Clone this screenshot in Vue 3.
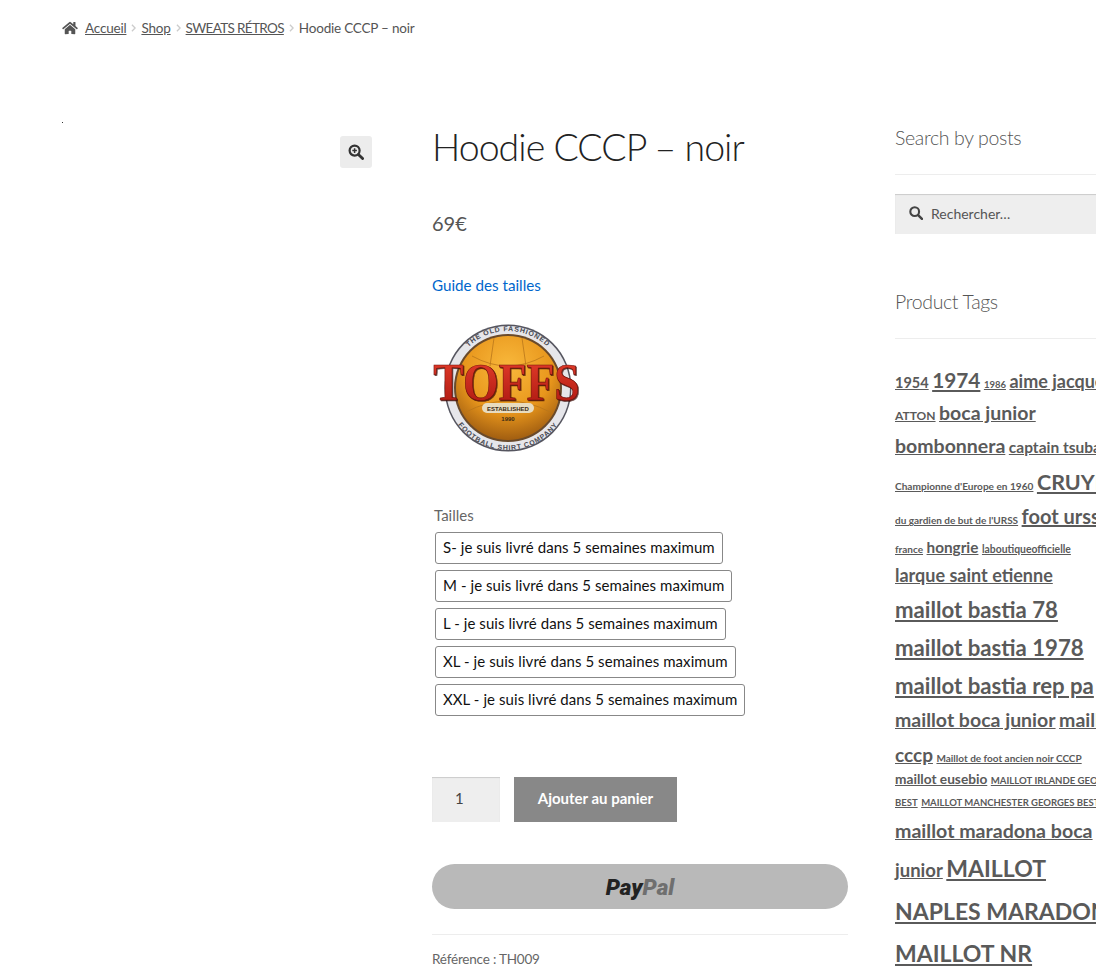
<template>
  <div class="page">
    <!-- Breadcrumb -->
    <nav class="breadcrumb">
      <svg class="home-icon" viewBox="0 0 576 512"><path d="M280.37 148.26L96 300.11V464a16 16 0 0 0 16 16l112.06-.29a16 16 0 0 0 15.92-16V368a16 16 0 0 1 16-16h64a16 16 0 0 1 16 16v95.64a16 16 0 0 0 16 16.05L464 480a16 16 0 0 0 16-16V300L295.67 148.26a12.19 12.19 0 0 0-15.3 0zM571.6 251.47L488 182.56V44.05a12 12 0 0 0-12-12h-56a12 12 0 0 0-12 12v72.61L318.47 43a48 48 0 0 0-61 0L4.34 251.47a12 12 0 0 0-1.6 16.9l25.5 31A12 12 0 0 0 45.15 301l235.22-193.74a12.19 12.19 0 0 1 15.3 0L530.9 301a12 12 0 0 0 16.9-1.6l25.5-31a12 12 0 0 0-1.7-16.93z" /></svg>
      <template v-for="c in crumbs" :key="c">
        <a class="crumb-link">{{ c }}</a>
        <svg class="crumb-sep" viewBox="0 0 6 10"><path d="M1 1l4 4-4 4" /></svg>
      </template>
      <span>Hoodie CCCP – noir</span>
    </nav>

    <div class="columns">
      <!-- Gallery -->
      <div class="gallery">
        <span class="gallery-dot"></span>
        <button class="zoom-btn">
          <svg viewBox="0 0 16 16" width="16" height="16">
            <circle cx="6.6" cy="6.6" r="5" fill="none" stroke="#333" stroke-width="2.2" />
            <path d="M10.4 10.4l4.2 4.2" stroke="#333" stroke-width="2.8" stroke-linecap="round" />
            <path d="M6.6 4.3v4.6M4.3 6.6h4.6" stroke="#333" stroke-width="1.5" />
          </svg>
        </button>
      </div>

      <!-- Summary -->
      <main class="summary">
        <h1 class="title">Hoodie CCCP – noir</h1>
        <p class="price">69€</p>
        <a class="guide">Guide des tailles</a>

        <svg class="logo" viewBox="0 0 150 134">
          <defs>
            <radialGradient id="ball" cx="50%" cy="30%" r="72%">
              <stop offset="0%" stop-color="#f9b93c" />
              <stop offset="60%" stop-color="#e8961c" />
              <stop offset="100%" stop-color="#9c5a10" />
            </radialGradient>
            <linearGradient id="red" x1="0" y1="0" x2="0" y2="1">
              <stop offset="0%" stop-color="#e8402c" />
              <stop offset="100%" stop-color="#a81510" />
            </linearGradient>
            <path id="arcTop" d="M19 66a57 57 0 0 1 114 0" />
            <path id="arcBottom" d="M14 66a62 62 0 0 0 124 0" />
          </defs>
          <circle cx="76" cy="66" r="63.5" fill="#55555f" />
          <circle cx="76" cy="66" r="62" fill="#e6e6ea" />
          <circle cx="76" cy="66" r="54" fill="#6a4a2a" />
          <circle cx="76" cy="66" r="52" fill="url(#ball)" />
          <path d="M40 34q36 20 72 0M62 16l-4 28M90 16l4 28M34 90q42-22 84 0" fill="none" stroke="#b9761a" stroke-width="0.8" />
          <text class="ring-text" fill="#4a4a52"><textPath href="#arcTop" startOffset="50%" text-anchor="middle">THE OLD FASHIONED</textPath></text>
          <text class="ring-text" fill="#4a4a52"><textPath href="#arcBottom" startOffset="50%" text-anchor="middle">FOOTBALL SHIRT COMPANY</textPath></text>
          <rect x="50" y="81" width="52" height="10" rx="5" fill="#e8dcc0" />
          <text class="est" x="76" y="88.5" text-anchor="middle">ESTABLISHED</text>
          <text class="est" x="76" y="99" text-anchor="middle">1990</text>
          <text class="logo-name" transform="translate(74.5 78) scale(0.88 1)" text-anchor="middle">TOFFS</text>
        </svg>

        <div class="sizes-label">Tailles</div>
        <div class="sizes">
          <label v-for="s in sizes" :key="s" class="size">{{ s }} je suis livré dans 5 semaines maximum</label>
        </div>

        <div class="cart">
          <div class="qty">1</div>
          <button class="add-btn">Ajouter au panier</button>
        </div>

        <button class="paypal"><span class="pp-a">Pay</span><span class="pp-b">Pal</span></button>
        <div class="meta">Référence : TH009</div>
      </main>

      <!-- Sidebar -->
      <aside class="sidebar">
        <h2 class="widget-title">Search by posts</h2>
        <div class="search">
          <svg viewBox="0 0 16 16" width="14" height="14">
            <circle cx="6.5" cy="6.5" r="5" fill="none" stroke="#444" stroke-width="2.4" />
            <path d="M10.4 10.4l4.4 4.4" stroke="#444" stroke-width="2.8" stroke-linecap="round" />
          </svg>
          <span>Rechercher…</span>
        </div>
        <h2 class="widget-title tags-title">Product Tags</h2>
        <div class="tags">
          <div v-for="(row, i) in tagRows" :key="i" class="tag-row" :style="{ height: row.h + 'px' }">
            <a v-for="t in row.items" :key="t[0]" class="tag" :style="{ fontSize: t[1] + 'px' }">{{ t[0] }}</a>
          </div>
        </div>
      </aside>
    </div>
  </div>
</template>

<script setup>
const crumbs = ['Accueil', 'Shop', 'SWEATS RÉTROS']
const sizes = ['S-', 'M -', 'L -', 'XL -', 'XXL -']

const tagRows = [
  { h: 33, items: [['1954', 14.5], ['1974', 20.8], ['1986', 9.5], ['aime jacquet', 18]] },
  { h: 33, items: [['ATTON', 12], ['boca junior', 19.5]] },
  { h: 36, items: [['bombonnera', 19.5], ['captain tsubasa', 15.5]] },
  { h: 34, items: [["Championne d'Europe en 1960", 10.1], ['CRUYFF', 21.5]] },
  { h: 31, items: [["du gardien de but de l'URSS", 10], ['foot urss', 20]] },
  { h: 28, items: [['france', 10], ['hongrie', 15.3], ['laboutiqueofficielle', 10.4]] },
  { h: 35, items: [['larque saint etienne', 18]] },
  { h: 38, items: [['maillot bastia 78', 22.2]] },
  { h: 38, items: [['maillot bastia 1978', 22.2]] },
  { h: 34, items: [['maillot bastia rep pa', 22.2]] },
  { h: 35, items: [['maillot boca junior', 19.5], ['maillot', 19.5]] },
  { h: 24, items: [['cccp', 19], ['Maillot de foot ancien noir CCCP', 10]] },
  { h: 24, items: [['maillot eusebio', 13.7], ['MAILLOT IRLANDE GEORGES', 9.6]] },
  { h: 28, items: [['BEST', 9.5], ['MAILLOT MANCHESTER GEORGES BEST', 9.5]] },
  { h: 37, items: [['maillot maradona boca', 19.6]] },
  { h: 43, items: [['junior', 18.5], ['MAILLOT', 23]] },
  { h: 42, items: [['NAPLES MARADONA', 23]] },
  { h: 42, items: [['MAILLOT NR', 23]] },
]
</script>

<style>
html, body {
  margin: 0;
  overflow: hidden;
  background: #fff;
}
</style>

<style scoped>
.page {
  height: 971px;
  overflow: hidden;
  font-family: Lato, "Liberation Sans", sans-serif;
  color: #6d6d6d;
}

/* Breadcrumb */
.breadcrumb {
  display: flex;
  align-items: center;
  height: 18px;
  padding: 19px 0 0 62px;
  font-size: 13.5px;
  letter-spacing: -0.2px;
  color: #555;
  white-space: nowrap;
}
.home-icon {
  width: 16px;
  height: 14px;
  fill: #555;
  margin-right: 7px;
}
.crumb-link {
  text-decoration: underline;
}
.crumb-link:nth-of-type(3) {
  letter-spacing: -0.65px;
}
.crumb-sep {
  width: 5px;
  height: 8px;
  margin: 0 5px;
  fill: none;
  stroke: #ccc;
  stroke-width: 1.6;
}

.columns {
  display: flex;
  align-items: flex-start;
  padding: 85px 0 0 62px;
  width: 1300px;
}

/* Gallery */
.gallery {
  position: relative;
  width: 370px;
  height: 80px;
  flex-shrink: 0;
}
.gallery-dot {
  position: absolute;
  left: 0;
  top: 0;
  width: 1px;
  height: 1px;
  background: #333;
}
.zoom-btn {
  position: absolute;
  left: 278px;
  top: 14px;
  width: 32px;
  height: 32px;
  padding: 0;
  border: 0;
  border-radius: 3px;
  background: #ececec;
  display: flex;
  align-items: center;
  justify-content: center;
}

/* Summary */
.summary {
  width: 416px;
  flex-shrink: 0;
}
.title {
  margin: -1px 0 0;
  font-size: 37.5px;
  font-weight: 300;
  line-height: 52px;
  letter-spacing: -0.98px;
  color: #222;
}
.price {
  margin: 36px 0 0;
  font-size: 20px;
  line-height: 28px;
  color: #555;
}
.guide {
  display: block;
  margin-top: 38px;
  font-size: 15.2px;
  line-height: 20px;
  color: #0066cc;
}
.logo {
  display: block;
  width: 150px;
  height: 134px;
  margin-top: 27px;
}
.ring-text {
  font-family: "Liberation Sans", sans-serif;
  font-size: 7px;
  font-weight: 700;
  letter-spacing: 0.8px;
}
.logo-name {
  font-family: "Liberation Serif", serif;
  font-size: 52px;
  font-weight: 700;
  fill: url(#red);
  stroke: #6e0f0a;
  stroke-width: 0.6;
  filter: drop-shadow(1px 1px 0.5px rgba(60, 10, 5, 0.8));
}
.est {
  font-family: "Liberation Sans", sans-serif;
  font-size: 6px;
  font-weight: 700;
  fill: #3a2a16;
}
.sizes-label {
  margin: 49px 0 0 2px;
  font-size: 15px;
  line-height: 20px;
  color: #666;
}
.sizes {
  display: flex;
  flex-direction: column;
  align-items: flex-start;
  gap: 6px;
  margin: 7px 0 0 3px;
}
.size {
  box-sizing: border-box;
  height: 32px;
  padding: 0 7px;
  border: 1px solid #888;
  border-radius: 3px;
  font-size: 15px;
  line-height: 28px;
  letter-spacing: 0.07px;
  color: #111;
  white-space: nowrap;
}
.cart {
  display: flex;
  gap: 14px;
  margin-top: 61px;
}
.qty {
  box-sizing: border-box;
  width: 68px;
  height: 45px;
  padding-left: 23px;
  background: #eee;
  box-shadow: inset 0 1px 1px rgba(0, 0, 0, 0.15);
  font-size: 15px;
  line-height: 43px;
  color: #444;
}
.add-btn {
  width: 163px;
  height: 45px;
  border: 0;
  padding: 0 0 3px;
  background: #888;
  color: #fff;
  font-family: inherit;
  font-size: 15px;
  font-weight: 700;
}
.paypal {
  display: block;
  width: 416px;
  height: 45px;
  margin-top: 42px;
  border: 0;
  padding: 0;
  border-radius: 23px;
  background: #b9b9b9;
  font-family: Roboto, "Liberation Sans", sans-serif;
  font-size: 22.5px;
  font-weight: 900;
  font-style: italic;
  letter-spacing: 0;
}
.pp-a {
  color: #222;
}
.pp-b {
  color: #6f6f6f;
}
.meta {
  margin-top: 25px;
  padding-top: 15px;
  border-top: 1px solid #ededed;
  font-size: 13.5px;
  line-height: 18px;
  letter-spacing: -0.2px;
  color: #666;
}

/* Sidebar */
.sidebar {
  width: 300px;
  margin-left: 47px;
  flex-shrink: 0;
}
.widget-title {
  margin: 3px 0 0;
  padding-bottom: 23px;
  border-bottom: 1px solid #ededed;
  font-size: 19.5px;
  font-weight: 300;
  line-height: 26px;
  letter-spacing: -0.35px;
  color: #555;
}
.search {
  display: flex;
  align-items: center;
  gap: 8px;
  box-sizing: border-box;
  height: 40px;
  margin-top: 19px;
  padding: 0 0 2px 14px;
  background: #eee;
  box-shadow: inset 0 1px 1px rgba(0, 0, 0, 0.15);
  font-size: 14px;
  color: #555;
}
.tags-title {
  margin-top: 55px;
}
.tags {
  margin-top: 29px;
}
.tag-row {
  display: flex;
  align-items: baseline;
  gap: 3.5px;
  white-space: nowrap;
  line-height: 24px;
}
.tag {
  font-weight: 700;
  color: #5a5a5a;
  text-decoration: underline;
}
</style>
